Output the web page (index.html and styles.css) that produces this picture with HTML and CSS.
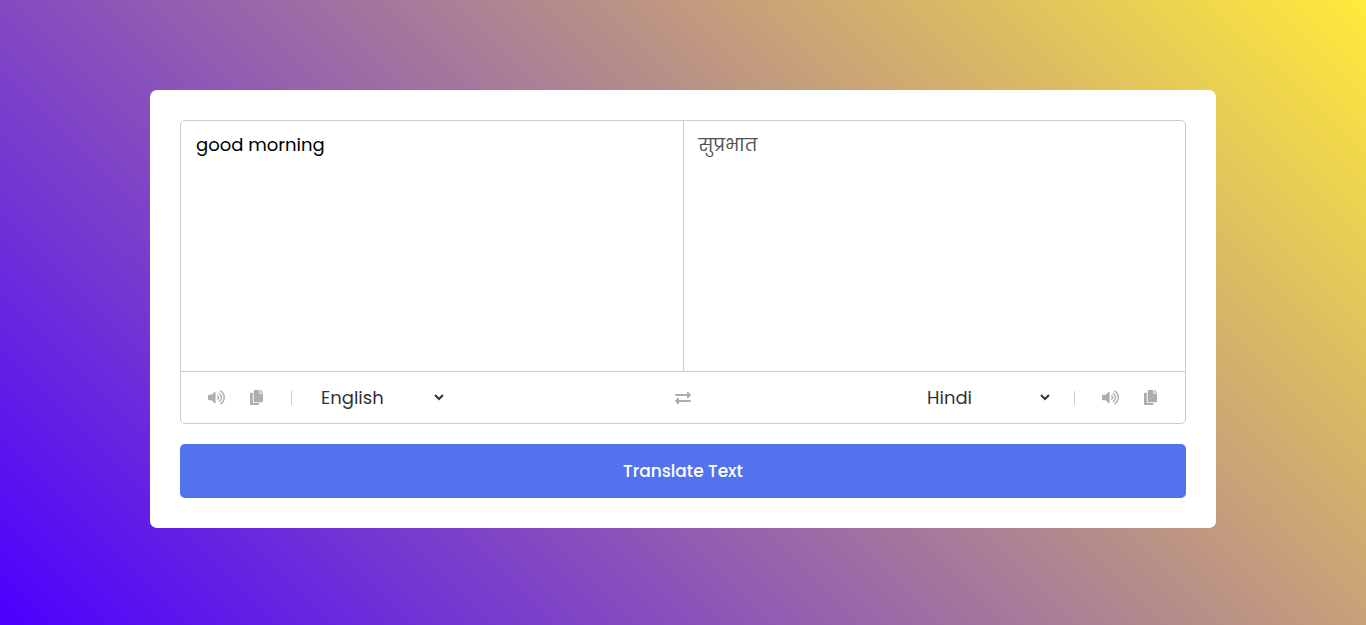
FILE: index.html
```html
<!DOCTYPE html>
<html lang="en">
<head>
<meta charset="utf-8">
<meta name="viewport" content="width=device-width, initial-scale=1">
<title>Language Translator</title>
<link rel="stylesheet" href="styles.css">
</head>
<body>
<svg class="sprite" aria-hidden="true">
  <symbol id="volume" viewBox="0 0 576 512"><path d="M215.03 71.05L126.06 160H24c-13.26 0-24 10.74-24 24v144c0 13.25 10.74 24 24 24h102.06l88.97 88.95c15.03 15.03 40.97 4.47 40.97-16.97V88.02c0-21.46-25.96-31.98-40.97-16.97zm233.32-51.08c-11.17-7.33-26.18-4.24-33.51 6.95-7.34 11.17-4.22 26.18 6.95 33.51 66.27 43.49 105.82 116.6 105.82 195.58 0 78.98-39.55 152.09-105.82 195.58-11.17 7.32-14.29 22.34-6.95 33.5 7.04 10.71 21.93 14.56 33.51 6.95C528.27 439.58 576 351.33 576 256S528.27 72.43 448.35 19.97zM480 256c0-63.53-32.06-121.94-85.77-156.24-11.19-7.14-26.03-3.82-33.12 7.46s-3.78 26.21 7.41 33.36C408.27 165.97 432 209.11 432 256s-23.73 90.02-63.48 115.42c-11.19 7.14-14.5 22.07-7.41 33.36 6.51 10.36 21.12 15.14 33.12 7.46C447.94 377.94 480 319.54 480 256zm-141.77-76.87c-11.58-6.33-26.19-2.16-32.61 9.45-6.39 11.61-2.16 26.2 9.45 32.61C327.98 228.28 336 241.63 336 256c0 14.38-8.02 27.72-20.92 34.81-11.61 6.41-15.84 21-9.45 32.61 6.43 11.66 21.05 15.8 32.61 9.45 28.23-15.55 45.77-45 45.77-76.88s-17.54-61.32-45.78-76.86z"/></symbol>
  <symbol id="copy" viewBox="0 0 448 512"><path d="M320 448v40c0 13.255-10.745 24-24 24H24c-13.255 0-24-10.745-24-24V120c0-13.255 10.745-24 24-24h72v296c0 30.879 25.121 56 56 56h168zm0-344V0H152c-13.255 0-24 10.745-24 24v368c0 13.255 10.745 24 24 24h272c13.255 0 24-10.745 24-24V128H344c-13.200 0-24-10.800-24-24zm120.971-31.029L375.029 7.029A24 24 0 0 0 358.059 0H352v96h96v-6.059a24 24 0 0 0-7.029-16.970z"/></symbol>
  <symbol id="exchange" viewBox="0 0 512 512"><path d="M0 168v-16c0-13.255 10.745-24 24-24h360V80c0-21.367 25.899-32.042 40.971-16.971l80 80c9.372 9.373 9.372 24.569 0 33.941l-80 80C409.956 271.982 384 261.456 384 240v-48H24c-13.255 0-24-10.745-24-24zm488 152H128v-48c0-21.314-25.862-32.080-40.971-16.971l-80 80c-9.372 9.373-9.372 24.569 0 33.941l80 80C102.057 463.997 128 453.437 128 432v-48h360c13.255 0 24-10.745 24-24v-16c0-13.255-10.745-24-24-24z"/></symbol>
</svg>
<main class="card">
  <div class="wrapper">
    <div class="texts">
      <textarea class="text from-text" aria-label="Enter text" spellcheck="false">good morning</textarea>
      <textarea class="text to-text" aria-label="Translation" lang="hi" readonly>सुप्रभात</textarea>
    </div>
    <div class="controls">
      <div class="side">
        <div class="icons">
          <button class="icon" type="button" aria-label="Listen to text"><svg class="glyph volume"><use href="#volume"/></svg></button>
          <button class="icon" type="button" aria-label="Copy text"><svg class="glyph copy"><use href="#copy"/></svg></button>
        </div>
        <select class="language" aria-label="Source language"><option>English</option><option>Hindi</option></select>
      </div>
      <button class="exchange" type="button" aria-label="Swap languages"><svg class="glyph swap"><use href="#exchange"/></svg></button>
      <div class="side to">
        <select class="language" aria-label="Target language"><option>Hindi</option><option>English</option></select>
        <div class="icons">
          <button class="icon" type="button" aria-label="Listen to translation"><svg class="glyph volume"><use href="#volume"/></svg></button>
          <button class="icon" type="button" aria-label="Copy translation"><svg class="glyph copy"><use href="#copy"/></svg></button>
        </div>
      </div>
    </div>
  </div>
  <button class="translate" type="button">Translate Text</button>
</main>
</body>
</html>
```

FILE: styles.css
```css
* {
  box-sizing: border-box;
  margin: 0;
  padding: 0;
  font-family: Poppins, Inter, "Noto Sans", sans-serif;
}

body {
  min-height: 100vh;
  padding: 90px 150px;
  background: linear-gradient(45deg, #4a00ff, #ffeb3b);
}

.sprite {
  position: absolute;
  width: 0;
  height: 0;
}

.card {
  padding: 30px;
  border-radius: 7px;
  background: #fff;
}

.wrapper {
  border: 1px solid #ccc;
  border-radius: 5px;
}

.texts {
  display: flex;
}

.text {
  flex: 1;
  min-width: 0;
  height: 250px;
  padding: 10px 15px;
  border: none;
  outline: none;
  resize: none;
  background: none;
  font-size: 18px;
  font-weight: 400;
  line-height: 27px;
  color: #000;
}

.to-text {
  border-left: 1px solid #ccc;
  color: #545454;
}

.controls {
  display: grid;
  grid-template-columns: 1fr auto 1fr;
  align-items: center;
  padding: 12px 28px 12px 27px;
  border-top: 1px solid #ccc;
}

.side {
  display: flex;
  align-items: center;
  gap: 25px;
}

.side.to {
  justify-content: flex-end;
  gap: 21px;
}

.icons {
  display: flex;
  align-items: center;
  gap: 25px;
  height: 14px;
  padding-right: 28px;
  border-right: 1px solid #ccc;
}

.to .icons {
  padding: 0 0 0 27px;
  border-right: none;
  border-left: 1px solid #ccc;
}

.icon,
.exchange {
  display: flex;
  border: none;
  background: none;
  color: #adadad;
  cursor: pointer;
}

.glyph {
  height: 15px;
  fill: currentColor;
}

.volume {
  width: 17px;
}

.copy {
  width: 13px;
}

.swap {
  width: 16px;
  height: 16px;
}

.language {
  width: 130px;
  height: 27px;
  border: none;
  outline: none;
  background: none;
  color: #333;
  font-size: 18px;
  font-weight: 400;
}

.translate {
  width: 100%;
  margin-top: 20px;
  padding: 14px;
  border: none;
  border-radius: 5px;
  background: #5372f0;
  color: #fff;
  font-size: 17px;
  font-weight: 500;
  line-height: 26px;
  cursor: pointer;
}
```
